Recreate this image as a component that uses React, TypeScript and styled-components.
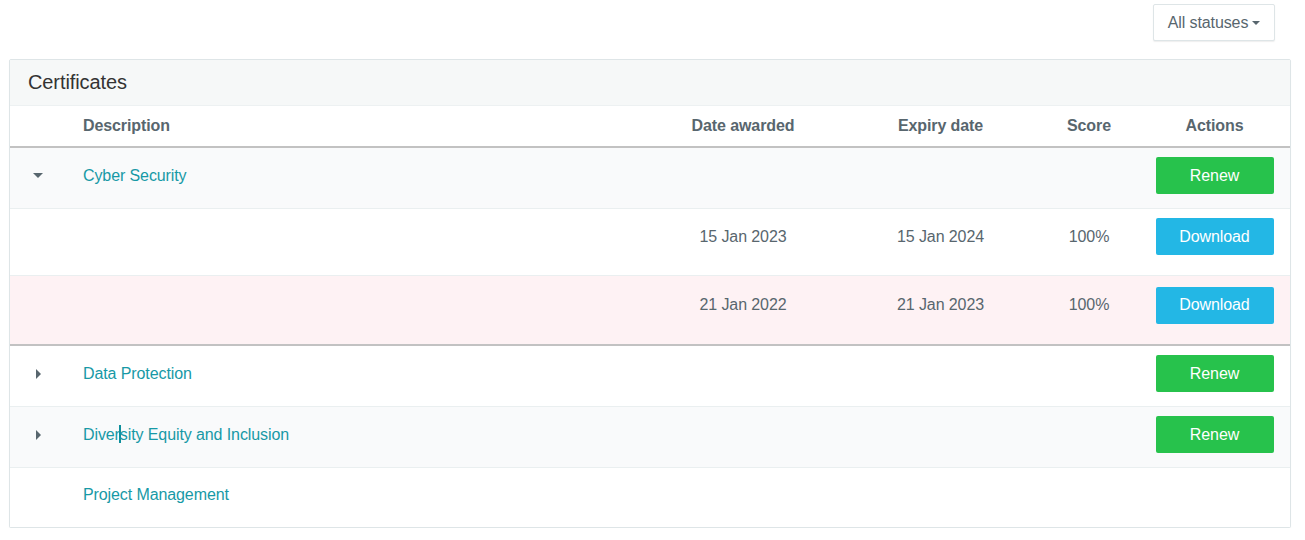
import React from "react";
import styled, { createGlobalStyle } from "styled-components";

const Global = createGlobalStyle`
  html, body { margin: 0; padding: 0; background: #fff; }
  body { font-family: "Liberation Sans", Arial, sans-serif; font-size: 16px; color: #58666e; letter-spacing: -0.1px; }
  * { box-sizing: border-box; }
`;

const Page = styled.div`
  padding: 4px 14px 0 9px;
`;

const Toolbar = styled.div`
  display: flex;
  justify-content: flex-end;
  padding-right: 16px;
  margin-bottom: 18px;
`;

const DropButton = styled.button`
  display: flex;
  align-items: center;
  gap: 4px;
  height: 37px;
  width: 122px;
  justify-content: center;
  background: #fff;
  border: 1px solid #dee5e7;
  border-radius: 2px;
  box-shadow: 0 1px 1px rgba(90, 90, 90, 0.1);
  font-family: inherit;
  font-size: 16px;
  letter-spacing: -0.1px;
  color: #58666e;
  padding: 0;
`;

const Caret = styled.span`
  display: inline-block;
  width: 0;
  height: 0;
  border-left: 4px solid transparent;
  border-right: 4px solid transparent;
  border-top: 4px solid currentColor;
`;

const ToggleCaret = styled.span<{ $dir: "down" | "right" }>`
  display: inline-block;
  width: 0;
  height: 0;
  color: #58666e;
  ${(p) =>
    p.$dir === "down"
      ? `border-left: 5px solid transparent; border-right: 5px solid transparent; border-top: 5px solid currentColor; margin-left: 0;`
      : `border-top: 5px solid transparent; border-bottom: 5px solid transparent; border-left: 5px solid currentColor; margin-left: 3px;`}
`;

const Panel = styled.div`
  border: 1px solid #dee5e7;
  border-radius: 2px;
  background: #fff;
  box-shadow: 0 1px 1px rgba(0, 0, 0, 0.05);
`;

const PanelHeading = styled.div`
  height: 46px;
  background: #f6f8f8;
  border-bottom: 1px solid #edf1f2;
  display: flex;
  align-items: center;
  padding-left: 18px;
  font-size: 20px;
  color: #333;
`;

const cols = "73px 1fr 200px 195px 102px 150px";

const HeadRow = styled.div`
  display: grid;
  grid-template-columns: ${cols};
  height: 42px;
  align-items: center;
  border-bottom: 2px solid #c2c2c2;
  font-weight: bold;
  color: #58666e;
`;

const Group = styled.div<{ $last?: boolean }>`
  border-bottom: ${(p) => (p.$last ? "none" : "2px solid #c2c2c2")};
`;

const Row = styled.div<{
  $tone?: "stripe" | "danger" | "plain";
  $h?: number;
  $lift?: number;
  $last?: boolean;
}>`
  display: grid;
  grid-template-columns: ${cols};
  align-items: center;
  height: ${(p) => p.$h ?? 61}px;
  padding-bottom: ${(p) => p.$lift ?? 5}px;
  background: ${(p) =>
    p.$tone === "stripe" ? "#f9fafb" : p.$tone === "danger" ? "#fef2f4" : "#fff"};
  border-bottom: ${(p) => (p.$last ? "none" : "1px solid #eaeff0")};
`;

const Cell = styled.div<{ $center?: boolean }>`
  display: flex;
  justify-content: ${(p) => (p.$center ? "center" : "flex-start")};
  align-items: center;
  white-space: nowrap;
`;

const ActionCell = styled.div`
  display: flex;
  justify-content: center;
  align-items: center;
  padding-right: 1px;
`;

const ToggleCell = styled.div`
  display: flex;
  align-items: center;
  padding-left: 23px;
`;

const Link = styled.a`
  color: #1799a6;
  text-decoration: none;
  cursor: pointer;
`;

const TextCaret = styled.span`
  display: inline-block;
  width: 2px;
  height: 18px;
  background: #0e8f9c;
  margin: 0 -1px;
  vertical-align: -3px;
`;

const ActionButton = styled.button<{ $kind: "green" | "blue" }>`
  width: 118px;
  height: 37px;
  border: none;
  border-radius: 2px;
  font-family: inherit;
  font-size: 16px;
  letter-spacing: -0.1px;
  color: #fff;
  background: ${(p) => (p.$kind === "green" ? "#27c24c" : "#23b7e5")};
  cursor: pointer;
`;

export default function App() {
  return (
    <>
      <Global />
      <Page>
        <Toolbar>
          <DropButton>
            All statuses <Caret />
          </DropButton>
        </Toolbar>
        <Panel>
          <PanelHeading>Certificates</PanelHeading>
          <HeadRow>
            <div />
            <Cell>Description</Cell>
            <Cell $center>Date awarded</Cell>
            <Cell $center>Expiry date</Cell>
            <Cell $center>Score</Cell>
            <ActionCell>Actions</ActionCell>
          </HeadRow>
          <Group>
            <Row $tone="stripe">
              <ToggleCell>
                <ToggleCaret $dir="down" />
              </ToggleCell>
              <Cell>
                <Link>Cyber Security</Link>
              </Cell>
              <div />
              <div />
              <div />
              <ActionCell>
                <ActionButton $kind="green">Renew</ActionButton>
              </ActionCell>
            </Row>
            <Row $h={67} $lift={11}>
              <div />
              <div />
              <Cell $center>15 Jan 2023</Cell>
              <Cell $center>15 Jan 2024</Cell>
              <Cell $center>100%</Cell>
              <ActionCell>
                <ActionButton $kind="blue">Download</ActionButton>
              </ActionCell>
            </Row>
            <Row $tone="danger" $h={68} $lift={10} $last>
              <div />
              <div />
              <Cell $center>21 Jan 2022</Cell>
              <Cell $center>21 Jan 2023</Cell>
              <Cell $center>100%</Cell>
              <ActionCell>
                <ActionButton $kind="blue">Download</ActionButton>
              </ActionCell>
            </Row>
          </Group>
          <Group $last>
            <Row>
              <ToggleCell>
                <ToggleCaret $dir="right" />
              </ToggleCell>
              <Cell>
                <Link>Data Protection</Link>
              </Cell>
              <div />
              <div />
              <div />
              <ActionCell>
                <ActionButton $kind="green">Renew</ActionButton>
              </ActionCell>
            </Row>
            <Row $tone="stripe">
              <ToggleCell>
                <ToggleCaret $dir="right" />
              </ToggleCell>
              <Cell>
                <Link>
                  Diver<TextCaret />sity Equity and Inclusion
                </Link>
              </Cell>
              <div />
              <div />
              <div />
              <ActionCell>
                <ActionButton $kind="green">Renew</ActionButton>
              </ActionCell>
            </Row>
            <Row $h={59} $last>
              <div />
              <Cell>
                <Link>Project Management</Link>
              </Cell>
              <div />
              <div />
              <div />
              <div />
            </Row>
          </Group>
        </Panel>
      </Page>
    </>
  );
}
